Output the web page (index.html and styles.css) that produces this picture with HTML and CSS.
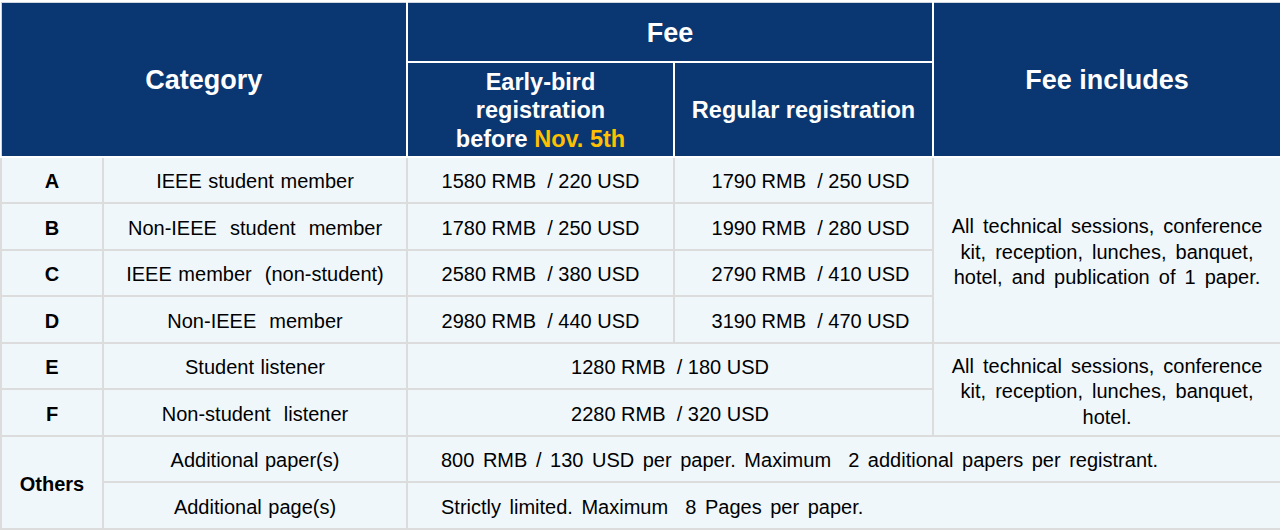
FILE: index.html
```html
<!DOCTYPE html>
<html>
<head>
<meta charset="utf-8">
<link rel="stylesheet" href="styles.css">
</head>
<body>
<table class="fees">
  <colgroup>
    <col class="c1"><col class="c2"><col class="c3"><col class="c4"><col class="c5">
  </colgroup>
  <thead>
    <tr class="h1">
      <th colspan="2" rowspan="2" class="big">Category</th>
      <th colspan="2" class="big">Fee</th>
      <th rowspan="2" class="big">Fee includes</th>
    </tr>
    <tr class="h2">
      <th class="sub">Early-bird<br>registration<br>before <span class="date">Nov. 5th</span></th>
      <th class="sub">Regular registration</th>
    </tr>
  </thead>
  <tbody>
    <tr>
      <td class="letter">A</td><td class="ws">IEEE student member</td>
      <td>1580 RMB&nbsp; / 220 USD</td><td class="reg">1790 RMB&nbsp; / 250 USD</td>
      <td rowspan="4" class="incl">All technical sessions, conference kit, reception, lunches, banquet, hotel, and publication of 1 paper.</td>
    </tr>
    <tr>
      <td class="letter">B</td><td class="ws">Non-IEEE&nbsp; student&nbsp; member</td>
      <td>1780 RMB&nbsp; / 250 USD</td><td class="reg">1990 RMB&nbsp; / 280 USD</td>
    </tr>
    <tr>
      <td class="letter">C</td><td class="ws">IEEE member&nbsp; (non-student)</td>
      <td>2580 RMB&nbsp; / 380 USD</td><td class="reg">2790 RMB&nbsp; / 410 USD</td>
    </tr>
    <tr>
      <td class="letter">D</td><td class="ws">Non-IEEE&nbsp; member</td>
      <td>2980 RMB&nbsp; / 440 USD</td><td class="reg">3190 RMB&nbsp; / 470 USD</td>
    </tr>
    <tr>
      <td class="letter">E</td><td class="ws">Student listener</td>
      <td colspan="2">1280 RMB&nbsp; / 180 USD</td>
      <td rowspan="2" class="incl">All technical sessions, conference kit, reception, lunches, banquet, hotel.</td>
    </tr>
    <tr>
      <td class="letter">F</td><td class="ws">Non-student&nbsp; listener</td>
      <td colspan="2">2280 RMB&nbsp; / 320 USD</td>
    </tr>
    <tr>
      <td rowspan="2" class="letter">Others</td><td class="ws">Additional paper(s)</td>
      <td colspan="3" class="left">800 RMB / 130 USD per paper. Maximum&nbsp; 2 additional papers per registrant.</td>
    </tr>
    <tr>
      <td class="ws">Additional page(s)</td>
      <td colspan="3" class="left">Strictly limited. Maximum&nbsp; 8 Pages per paper.</td>
    </tr>
  </tbody>
</table>
</body>
</html>
```

FILE: styles.css
```css
html, body {
  margin: 0;
  padding: 0;
  background: #ffffff;
}
body {
  padding: 2px 0 0 0;
  font-family: "Liberation Sans", Arial, sans-serif;
}
.fees {
  width: 1280px;
  border-collapse: collapse;
  table-layout: fixed;
  color: #000;
}
.c1 { width: 102px; }
.c2 { width: 304px; }
.c3 { width: 267px; }
.c4 { width: 259px; }
.c5 { width: 348px; }

.fees th {
  background: #0a3671;
  color: #ffffff;
  font-weight: bold;
  border: 2px solid #ffffff;
  text-align: center;
  vertical-align: middle;
  padding: 3px 0 0 0;
}
.fees thead tr:first-child th {
  border-top: 1px solid #cfd6e0;
}
.fees thead tr th:first-child {
  border-left: 1px solid #cfd6e0;
}
.h1 { height: 59px; }
.h2 { height: 95px; }
.big {
  font-size: 27px;
}
.sub {
  font-size: 23.5px;
  line-height: 28.5px;
}
.date {
  color: #ffc000;
}
.fees td {
  background: #f0f7fb;
  border: 2px solid #dcdcdc;
  text-align: center;
  vertical-align: middle;
  font-size: 20px;
  height: 40.5px;
  padding: 4px 0 0 0;
  white-space: nowrap;
}
.fees td.letter {
  font-weight: bold;
}
.fees td.ws {
  word-spacing: 1px;
}
.fees td.reg {
  padding-left: 14px;
}
.fees td.incl {
  white-space: normal;
  line-height: 25.5px;
  padding: 6px 4px 0 4px;
  word-spacing: 3.5px;
}
.fees td.left {
  text-align: left;
  padding-left: 33px;
  word-spacing: 3px;
}
```
